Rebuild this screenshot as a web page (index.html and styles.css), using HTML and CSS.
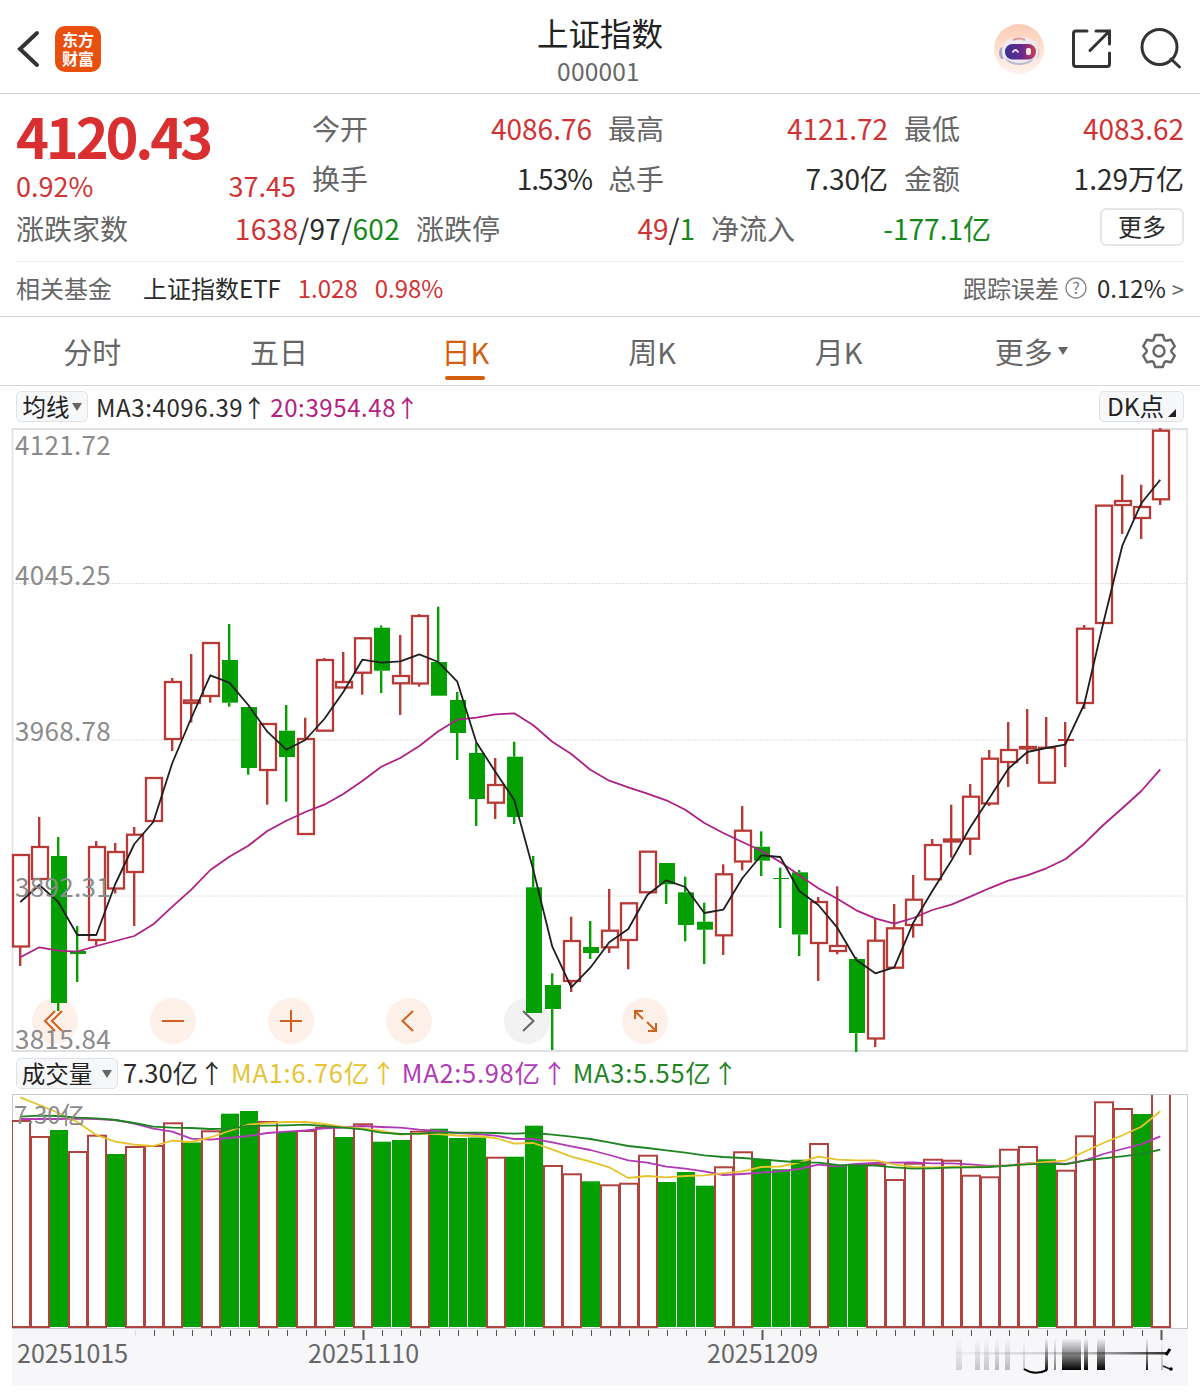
FILE: index.html
```
<!DOCTYPE html>
<html lang="zh-CN">
<head>
  <meta charset="UTF-8" />
  <meta name="viewport" content="width=device-width, initial-scale=1.0" />
  <title>上证指数 000001</title>
  <link rel="stylesheet" href="styles.css">
</head>
<body>
  <header class="header">
    <div class="header-left">
      <svg class="back" width="24" height="40" viewBox="0 0 24 40"><path d="M20 4 L3 20 L20 36" /></svg>
      <div class="logo"><span>东方</span><span>财富</span></div>
    </div>
    <div class="header-title">
      <h1>上证指数</h1>
      <div class="code">000001</div>
    </div>
    <div class="header-right">
      <svg width="50" height="50" viewBox="0 0 50 50">
        <defs>
          <linearGradient id="peach" x1="0" y1="0" x2="0" y2="1">
            <stop offset="0" stop-color="#fbccb4" /><stop offset="1" stop-color="#fff3ee" />
          </linearGradient>
          <linearGradient id="visor" x1="0" y1="0" x2="1" y2="0">
            <stop offset="0" stop-color="#3b3192" /><stop offset="0.55" stop-color="#672a8c" /><stop offset="1" stop-color="#c8414f" />
          </linearGradient>
        </defs>
        <circle cx="25" cy="25" r="25" fill="url(#peach)" />
        <ellipse cx="8.500" cy="29" rx="3.500" ry="6" fill="#aaa6bd" />
        <ellipse cx="43" cy="29" rx="2.500" ry="5" fill="#d8cad6" />
        <path d="M8 27 C8 18 15 13 26 13 S44 18 44 27 C44 37 38 41 26 41 S8 37 8 27 Z" fill="#efeaf2" />
        <path d="M11 34 Q26 44 40 34 Q36 41 26 41 Q14 41 11 34" fill="#bdb9cd" />
        <path d="M19 16 Q25 13 31 16" stroke="#dc9c90" stroke-width="2" fill="none" />
        <rect x="11" y="20" width="31" height="15.500" rx="7.500" fill="url(#visor)" />
        <path d="M18.500 28.500 Q21.500 23.500 24.500 28.500" stroke="#eee6ff" stroke-width="1.800" fill="none" />
        <rect x="32" y="24" width="5" height="7" rx="2" fill="#ffe4e8" />
      </svg>
      <svg class="line-icon" width="42" height="42" viewBox="0 0 42 42">
        <path d="M16 3 H5 Q2.500 3 2.500 5.500 V36 Q2.500 38.500 5 38.500 H36 Q38.500 38.500 38.500 36 V25 M25 3 H38.500 V16 M38 3.500 L19 22.500" />
      </svg>
      <svg class="line-icon" width="42" height="42" viewBox="0 0 42 42">
        <circle cx="19.500" cy="19" r="17.500" /><path d="M31 31 L39.500 39" />
      </svg>
    </div>
  </header>

  <section class="quote">
    <div class="quote-grid">
      <div class="price">4120.43</div>
      <div class="cell"><label>今开</label><span class="up">4086.76</span></div>
      <div class="cell"><label>最高</label><span class="up">4121.72</span></div>
      <div class="cell"><label>最低</label><span class="up">4083.62</span></div>
      <div class="cell change"><span class="up">0.92%</span><span class="up">37.45</span></div>
      <div class="cell"><label>换手</label><span class="pct">1.53%</span></div>
      <div class="cell"><label>总手</label><span>7.30亿</span></div>
      <div class="cell"><label>金额</label><span>1.29万亿</span></div>
    </div>
    <div class="quote-row">
      <div class="cell wide"><label>涨跌家数</label><span><b class="up">1638</b>/97/<b class="down">602</b></span></div>
      <div class="cell"><label>涨跌停</label><span><b class="up">49</b>/<b class="down">1</b></span></div>
      <div class="cell"><label>净流入</label><span class="down">-177.1亿</span></div>
      <button class="more">更多</button>
    </div>
    <div class="fund">
      <label>相关基金</label>
      <span class="fund-name">上证指数ETF</span>
      <span class="up">1.028</span>
      <span class="up">0.98%</span>
      <label class="track">跟踪误差</label>
      <svg width="22" height="22" viewBox="0 0 22 22">
        <circle cx="11" cy="11" r="10" fill="none" stroke="#8a8a8a" stroke-width="1.400" />
        <text x="11" y="16.500" class="help">?</text>
      </svg>
      <span class="err">0.12%</span>
      <span class="gt">&gt;</span>
    </div>
  </section>

  <nav class="tabs">
    <a>分时</a>
    <a>五日</a>
    <a class="active">日K</a>
    <a>周K</a>
    <a>月K</a>
    <a class="tab-more">更多<i class="caret"></i></a>
    <svg class="gear" width="38" height="38" viewBox="-19 -19 38 38">
      <path d="M-3.800 -16 H3.800 L5.500 -11 L6.800 -10.300 L12 -11.300 L15.800 -4.700 L12.300 -0.700 V0.700 L15.800 4.700 L12 11.300 L6.800 10.300 L5.500 11 L3.800 16 H-3.800 L-5.500 11 L-6.800 10.300 L-12 11.300 L-15.800 4.700 L-12.300 0.700 V-0.700 L-15.800 -4.700 L-12 -11.300 L-6.800 -10.300 L-5.500 -11 Z" />
      <circle r="5.500" />
    </svg>
  </nav>

  <div class="bar">
    <span class="chip">均线<i class="caret"></i></span>
    <span class="ma">MA3:4096.39<i>↑</i></span>
    <span class="ma ma20">20:3954.48<i>↑</i></span>
    <span class="chip dk">DK点<i class="corner"></i></span>
  </div>

  <svg class="chart" id="kline" width="1200" height="626" viewBox="0 427 1200 626"></svg>

  <div class="bar vol-bar">
    <span class="chip vol-chip">成交量<i class="caret"></i></span>
    <span class="vol">7.30亿<i>↑</i></span>
    <span class="vol ma1">MA1:6.76亿<i>↑</i></span>
    <span class="vol ma2">MA2:5.98亿<i>↑</i></span>
    <span class="vol ma3">MA3:5.55亿<i>↑</i></span>
  </div>

  <svg class="chart" id="volume" width="1200" height="292" viewBox="0 1094 1200 292"></svg>

  <script>
    const RED = '#b83a37';
    const GREEN = '#04a003';
    const STEP = 19;
    const cx = (i) => 20 + i * STEP;

    // [type, high, top, bottom, low]
    const candles = [
      ['r', 855, 855, 946.5, 966], ['r', 817, 847, 879, 879], ['g', 837, 856, 1003, 1011], ['g', 926, 951, 954, 982],
      ['r', 841, 847, 940, 945], ['r', 843, 852, 888.5, 893.5], ['r', 827, 834.7, 872, 926], ['r', 778, 778, 821, 821],
      ['r', 678, 682, 739, 751], ['r', 654, 700.5, 703, 722.6], ['r', 643, 643, 696, 702.7], ['g', 624, 660, 702.7, 706.7],
      ['g', 707, 707, 768, 774.7], ['r', 724, 724, 770, 804.7], ['g', 705, 730.7, 757, 801.7], ['r', 717.7, 739, 834, 834],
      ['r', 658, 660, 730.7, 731], ['r', 652, 682, 687.5, 688], ['r', 637, 638.3, 672.7, 694.7], ['g', 625.5, 627.7, 670.7, 693],
      ['r', 635, 676, 683.3, 715], ['r', 614, 616, 683.5, 686.7], ['g', 606.7, 662, 695.7, 695.7], ['g', 692, 700, 733, 760],
      ['g', 743, 753, 799, 826], ['r', 758, 785, 802.7, 819], ['g', 741.7, 756.7, 817, 824], ['g', 856, 887.3, 1013, 1013],
      ['g', 973.3, 985, 1009, 1050], ['r', 916.7, 941, 981, 992], ['g', 921, 947, 953, 959], ['r', 889, 930.7, 947.3, 953],
      ['r', 903.3, 903.3, 940, 969.3], ['r', 851.7, 851.7, 892.3, 893], ['g', 863, 863, 884.3, 904], ['g', 876.7, 892.3, 925, 941.3],
      ['g', 902.7, 921.7, 929.7, 964], ['r', 864.3, 874.3, 935.3, 955], ['r', 806, 830.7, 861.5, 870.3], ['g', 831.3, 846.7, 860.7, 876],
      ['g', 867.7, 878, 879, 928], ['g', 870, 872.3, 934.5, 956], ['r', 897, 902, 943, 981], ['r', 886.3, 946, 951, 954.3],
      ['g', 957, 959, 1033, 1052], ['r', 918.3, 940.7, 1038.5, 1047], ['r', 904, 928.3, 967.7, 967.7], ['r', 875, 899.7, 925, 937.7],
      ['r', 839, 845, 879.3, 879.3], ['r', 804.7, 839.5, 841.5, 857.7], ['r', 784, 796.7, 838.7, 855], ['r', 750, 758.7, 803.5, 806],
      ['r', 722, 750, 762, 787], ['r', 709, 747, 748.5, 764], ['r', 717, 747.7, 782.7, 782.7], ['r', 722, 740, 740, 767],
      ['r', 625, 628.7, 703, 709], ['r', 505.3, 505.6, 623, 623], ['r', 474.7, 501, 505, 534], ['r', 484.7, 507, 518, 539],
      ['r', 428, 430.7, 499.3, 505]
    ];

    const ma3 = [902, 885, 902, 935, 935, 884, 844, 822, 763, 718, 675.3, 682.7, 705, 731.7, 749.7, 740, 719, 692, 659.7, 662.7,
      661.3, 654.3, 662, 681.7, 742.3, 771.7, 800, 870, 946.7, 987.3, 967.7, 942.3, 929, 895, 880.3, 887, 913, 909.7, 878.3, 855.3,
      857, 891, 905, 927.7, 960, 973.3, 967.3, 922.7, 891, 860.7, 827.3, 798.3, 768.7, 752, 748, 744.7, 704, 623, 545.7, 503.3, 479.7];
    const ma20 = [957.3, 947.3, 950.7, 951.7, 946, 941, 936, 924.3, 906.7, 889.7, 870, 856.7, 845.7, 831, 820.7, 812, 804.7, 794, 781, 766.7,
      758, 746, 731.3, 719.7, 717.7, 714.3, 713.3, 725.3, 741.7, 754, 769.7, 780.7, 787.3, 793.7, 800.3, 809.7, 823, 833, 842, 850.7,
      862, 875.3, 888.3, 898.7, 910.3, 918.3, 923.7, 918, 910, 904.7, 896.7, 888.3, 880.7, 875.3, 868.3, 859.3, 843.7, 825, 808.3, 791, 769.3];

    // tops of the volume bars
    const volumes = [1121, 1137, 1130, 1152, 1135.7, 1154, 1147, 1146, 1123.3, 1142.5, 1131.3, 1113.7, 1111, 1122, 1132, 1131, 1127.7, 1137, 1124.3, 1141.7,
      1140, 1131.7, 1128.7, 1138, 1137.5, 1157.7, 1156.7, 1125.7, 1166, 1174.3, 1181.3, 1185.3, 1183.7, 1155.7, 1182, 1172, 1185.7, 1167.3, 1152.3, 1159.3,
      1169.3, 1159.7, 1144, 1166, 1163.7, 1165, 1180, 1163.7, 1159.7, 1160.7, 1175.7, 1177.3, 1149.7, 1147, 1159.3, 1170.7, 1136.3, 1102.3, 1109, 1114, 1085];
    const volColors = 'rrgrrgrrrgrggrgrrgrggrgggrggrrgrrrgggrrgggrggrrrrrrrrrgrrrrgr';

    const vma1 = [1097.3, 1105, 1113, 1122, 1135, 1141.7, 1144.7, 1146, 1140.7, 1142, 1137.5, 1131, 1124.7, 1123, 1122, 1122, 1124, 1127, 1128.5, 1131,
      1134.5, 1133.5, 1134, 1135.5, 1136, 1138, 1143.7, 1143, 1149.3, 1156.7, 1161.7, 1167.3, 1178, 1176, 1177.3, 1176, 1175.3, 1173.3, 1171.3, 1167,
      1166.5, 1162.5, 1156.7, 1159.7, 1160.3, 1160.3, 1164.3, 1167, 1167.3, 1166.7, 1166.7, 1166.7, 1165.7, 1163.7, 1162, 1160.7, 1151.7, 1143, 1135.3, 1126.7, 1111.3];
    const vma2 = [1119, 1119, 1119, 1118.5, 1119, 1120, 1123.7, 1128.7, 1131.7, 1138.7, 1139.7, 1138, 1136, 1133, 1131.7, 1130.3, 1128.3, 1127.5, 1126, 1127,
      1127.7, 1129.7, 1131, 1133, 1134, 1135.7, 1139, 1139, 1142.3, 1146.3, 1150, 1155, 1160.3, 1162.7, 1166.7, 1168.7, 1171.3, 1175, 1174, 1172.7,
      1171.3, 1169, 1164.7, 1166.3, 1164, 1163, 1162.7, 1162.3, 1163.3, 1163.3, 1164.3, 1166, 1165.3, 1163.5, 1162.5, 1164, 1160.7, 1154, 1149, 1144.3, 1136.3];
    const vma3 = [1116.7, 1115.7, 1116, 1117.7, 1118.3, 1120, 1123, 1126.7, 1127.7, 1128, 1129, 1128.7, 1126, 1125.7, 1125.3, 1124.7, 1126, 1127.7, 1129.3, 1132.7,
      1134, 1133.7, 1132.7, 1132.7, 1132.7, 1133, 1133.7, 1133, 1134.7, 1136.7, 1139, 1142.3, 1146, 1148, 1150.3, 1152.7, 1155.3, 1157, 1158, 1159.3,
      1161, 1162.3, 1162.7, 1165, 1165.3, 1165.7, 1167.3, 1168.7, 1168.3, 1167.7, 1167.3, 1167, 1165.7, 1164.3, 1163.7, 1164.3, 1160.7, 1158.3, 1156.3, 1154, 1149.7];

    function line(values, color) {
      const pts = values.map((y, i) => `${cx(i) + 0.3},${y}`).join(' ');
      return `<polyline points="${pts}" fill="none" stroke="${color}" stroke-width="1.8" stroke-linejoin="round"/>`;
    }

    function vline(x, y1, y2, color, w) {
      return `<path d="M${x} ${y1}V${y2}" stroke="${color}" stroke-width="${w}"/>`;
    }

    function drawKline() {
      let s = '<path d="M12 429H1188M12 1051H1188" stroke="#dfe0e1" stroke-width="2"/>';
      s += '<path d="M12.5 428V1052M1187 428V1052" stroke="#dfe0e1" stroke-width="1.5"/>';
      [583.5, 740, 896].forEach((y) => {
        s += `<path d="M13 ${y}H1187" stroke="#dedede" stroke-width="1" stroke-dasharray="2 1"/>`;
      });

      const buttons = [55, 173, 291, 409, 527, 645];
      buttons.forEach((x, i) => {
        s += `<circle cx="${x}" cy="1021" r="23" fill="${i === 4 ? '#f2f2f3' : '#fdf0e9'}"/>`;
      });

      candles.forEach(([type, high, top, bottom, low], i) => {
        const x = cx(i);
        const color = type === 'r' ? RED : GREEN;
        s += vline(x + 0.2, high, top, color, 2.4) + vline(x + 0.2, bottom, low, color, 2.4);
        if (type === 'g') {
          s += `<rect x="${x - 7}" y="${top}" width="16" height="${bottom - top}" fill="${color}"/>`;
        } else if (bottom === top) {
          s += `<path d="M${x - 7} ${top}H${x + 9}" stroke="${color}" stroke-width="2"/>`;
        } else {
          s += `<rect x="${x - 7}" y="${top}" width="16" height="${bottom - top}" fill="none" stroke="${color}" stroke-width="2.3"/>`;
        }
      });

      s += line(ma20, '#ad2184') + line(ma3, '#1f1f1f');

      // control icons
      s += '<g fill="none" stroke="#d0611f" stroke-width="2">';
      s += '<path d="M55 1011L45 1021L55 1031M62 1011L52 1021L62 1031"/>';
      s += '<path d="M162 1021H184M280 1021H302M291 1010V1032M413 1011L402.500 1021L413 1031"/>';
      s += '<path d="M635 1019V1011H643M635 1011L643 1019M648 1031H656V1023M656 1031L647 1022"/></g>';
      s += '<path d="M523 1011L533.500 1021L523 1031" fill="none" stroke="#666" stroke-width="2"/>';

      [['4121.72', 455], ['4045.25', 585], ['3968.78', 741], ['3892.31', 897], ['3815.84', 1049]].forEach(([t, y]) => {
        s += `<text x="15" y="${y}" class="axis-label">${t}</text>`;
      });
      document.getElementById('kline').innerHTML = s;
    }

    function drawVolume() {
      let s = '<defs><clipPath id="frame"><rect x="12" y="1095" width="1176" height="234"/></clipPath>';
      s += '<linearGradient id="fade" x1="0" y1="0" x2="0" y2="1"><stop offset="0" stop-color="#000" stop-opacity="0"/><stop offset="0.5" stop-color="#000" stop-opacity="0.45"/><stop offset="1" stop-color="#000"/></linearGradient>';
      s += '<linearGradient id="fadeX"><stop offset="0" stop-color="#000" stop-opacity="0.03"/><stop offset="0.6" stop-color="#000" stop-opacity="0.2"/><stop offset="1" stop-color="#000" stop-opacity="0.8"/></linearGradient></defs>';
      s += '<rect x="12" y="1329" width="1176" height="57" fill="#f7f7fa"/>';
      s += '<rect x="12.500" y="1094.500" width="1175" height="234" fill="#fff" stroke="#c9c9c9"/>';
      s += '<g clip-path="url(#frame)">';
      volumes.forEach((y, i) => {
        const x = cx(i);
        if (volColors[i] === 'g') s += `<rect x="${x - 8}" y="${y}" width="18" height="${1327 - y}" fill="${GREEN}"/>`;
      });
      volumes.forEach((y, i) => {
        const x = cx(i);
        if (volColors[i] === 'r') s += `<rect x="${x - 8}" y="${y}" width="18" height="${1327 - y}" fill="none" stroke="#b04340" stroke-width="2"/>`;
      });
      s += '</g>';
      s += line(vma2, '#b239b5') + line(vma1, '#e6c32d') + line(vma3, '#1f8424');
      s += '<text x="14" y="1124" class="vol-label">7.30亿</text>';

      for (let i = 6; i <= 60; i++) {
        const big = i === 18 || i === 39 || i === 60;
        s += vline(cx(i) + 1.5, 1330, big ? 1340 : 1336, i === 6 ? '#ddd' : '#555', big ? 2 : 1);
      }
      s += '<text x="17" y="1363" class="date">20251015</text>';
      s += '<text x="308" y="1363" class="date">20251110</text>';
      s += '<text x="707" y="1363" class="date">20251209</text>';

      // smeared mark in the lower right corner: [x, width, opacity]
      [[956, 6, 0.15], [975, 5, 0.2], [984, 5, 0.2], [995, 4, 0.25], [1005, 5, 0.25], [1023, 2, 0.2], [1045, 3, 0.9], [1054, 2, 0.5],
        [1062, 19, 1], [1084, 4, 1], [1097, 8, 1], [1146, 2, 0.9], [1161, 2, 0.25]].forEach(([x, w, o]) => {
        s += `<rect x="${x}" y="1338" width="${w}" height="32" fill="url(#fade)" opacity="${o}"/>`;
      });
      s += '<rect x="956" y="1352" width="211" height="2.500" fill="url(#fadeX)"/>';
      s += '<path d="M1024 1369Q1035 1376 1047 1370" fill="none" stroke="#000" stroke-width="2"/>';
      s += '<path d="M1166 1355L1170 1349" stroke="#000" stroke-width="3"/>';
      s += '<path d="M1163 1366L1170 1369" stroke="#222" stroke-width="1.500"/><circle cx="1171" cy="1369" r="1.800"/>';
      document.getElementById('volume').innerHTML = s;
    }

    drawKline();
    drawVolume();
  </script>
</body>
</html>
```
FILE: styles.css
```
* {
  box-sizing: border-box;
}
body {
  margin: 0;
  width: 1200px;
  height: 1398px;
  overflow: hidden;
  background: #fff;
  color: #2b2b2b;
  font-family: "Noto Sans CJK SC", sans-serif;
  font-size: 28px;
  line-height: 1;
}
i, b {
  font-style: normal;
  font-weight: normal;
}
svg {
  display: block;
  flex: none;
  overflow: visible;
}
.up {
  color: #d03335;
}
.down {
  color: #16891c;
}

.header {
  display: grid;
  grid-template-columns: 1fr 200px 1fr;
  height: 94px;
  border-bottom: 1px solid #d2d3d4;
}
.header-left, .header-right {
  display: flex;
  align-items: center;
  padding-top: 4px;
}
.header-left {
  padding-left: 17px;
  gap: 14px;
}
.header-right {
  justify-content: flex-end;
  gap: 27px;
  padding-right: 18px;
}
.back {
  fill: none;
  stroke: #333;
  stroke-width: 4;
  stroke-linecap: round;
}
.logo {
  display: flex;
  flex-direction: column;
  align-items: center;
  justify-content: center;
  gap: 3px;
  width: 46px;
  height: 46px;
  padding-bottom: 1px;
  border-radius: 10px;
  background: #e9500e;
  color: #fff;
  font-size: 16px;
  font-weight: bold;
}
.header-title {
  text-align: center;
}
h1 {
  margin: 16px 0 0;
  font-size: 31.5px;
  line-height: 32px;
  font-weight: normal;
  color: #222;
}
.code {
  margin-top: 10px;
  padding-right: 3px;
  font-size: 24.5px;
  line-height: 25px;
  letter-spacing: 0.2px;
  color: #666;
}
.line-icon {
  fill: none;
  stroke: #333;
  stroke-width: 3;
  stroke-linecap: round;
}

.quote {
  height: 223px;
  padding: 9px 16px 0;
  border-bottom: 1px solid #d2d3d4;
}
.quote-grid {
  display: grid;
  grid-template-columns: repeat(4, 280px);
  grid-template-rows: 50px 50px;
  gap: 0 16px;
}
.cell {
  display: flex;
  justify-content: space-between;
  align-items: center;
  height: 50px;
}
label {
  color: #666;
}
.price {
  font-size: 56px;
  font-weight: bold;
  line-height: 64px;
  letter-spacing: -3.2px;
  color: #d92f30;
}
.change {
  padding-top: 15px;
  font-size: 27px;
}
.pct {
  letter-spacing: -1px;
}
.wide span {
  letter-spacing: 0.3px;
}
.quote-row {
  display: grid;
  grid-template-columns: 384px 279px 280px 1fr;
  gap: 0 16px;
  height: 59px;
  border-bottom: 1px solid #eee;
}
.more {
  justify-self: end;
  width: 84px;
  height: 38px;
  margin-top: 5px;
  padding: 0 0 3px;
  border: 2px solid #e6e6e6;
  border-radius: 6px;
  background: #fff;
  color: #2b2b2b;
  font: 24px/1 "Noto Sans CJK SC", sans-serif;
}
.fund {
  display: flex;
  align-items: center;
  height: 52px;
  font-size: 24px;
}
.fund-name {
  margin: 0 17px 0 31px;
}
.fund .up + .up {
  margin-left: 17px;
}
.track {
  margin: 0 6px 0 auto;
}
.help {
  font-size: 16px;
  fill: #777;
  text-anchor: middle;
}
.err {
  margin: 0 6px 0 10px;
}
.gt {
  font-size: 22px;
  color: #666;
}

.tabs {
  display: grid;
  grid-template-columns: repeat(6, 186.6px) 80px;
  align-items: center;
  height: 69px;
  border-bottom: 1px solid #d2d7db;
  color: #666;
  font-size: 29px;
}
.tabs a {
  display: flex;
  align-items: center;
  justify-content: center;
  height: 68px;
  padding-right: 2px;
}
.tabs .tab-more {
  padding: 0 0 0 10px;
}
.tabs .active {
  position: relative;
  color: #d3600f;
}
.tabs .active::after {
  content: "";
  position: absolute;
  left: 72px;
  bottom: 5px;
  width: 40px;
  height: 4px;
  border-radius: 2px;
  background: #d3600f;
}
.gear {
  margin-left: 20px;
  fill: none;
  stroke: #666;
  stroke-width: 2.4;
  stroke-linejoin: round;
}
.caret {
  display: inline-block;
  border: 5px solid transparent;
  border-top: 8px solid #666;
  border-bottom: 0;
}
.tabs .caret {
  margin-left: 5px;
}

.bar {
  display: flex;
  align-items: center;
  height: 41px;
  padding: 0 16px;
}
.chip {
  display: flex;
  align-items: center;
  justify-content: center;
  width: 72px;
  height: 31px;
  border: 1px solid #e0e3e6;
  border-radius: 5px;
  background: #f6f7f9;
  color: #222;
  font-size: 23.5px;
}
.chip .caret {
  margin-left: 2px;
}
.ma {
  margin-left: 8px;
  font-size: 24px;
  letter-spacing: 0.6px;
}
.ma i, .vol i {
  display: inline-block;
  width: 20px;
  margin-left: 1px;
  letter-spacing: 0;
  text-indent: -2px;
}
.ma20 {
  margin-left: 6px;
  color: #b4217f;
}
.dk {
  width: 85px;
  margin-left: auto;
  gap: 4px;
  font-size: 24.5px;
}
.corner {
  align-self: flex-end;
  margin-bottom: 4px;
  border-left: 8px solid transparent;
  border-bottom: 8px solid #222;
}
.vol-chip {
  width: 102px;
}
.vol-chip .caret {
  margin-left: 10px;
}
.vol {
  margin-left: 5px;
  padding-bottom: 4px;
  font-size: 25.5px;
}
.vol i {
  text-indent: 0;
}
.ma1, .ma2, .ma3 {
  margin-left: 11px;
  letter-spacing: 0.7px;
}
.ma1 {
  margin-left: 12px;
  color: #e5c436;
}
.ma2 {
  color: #b13bb8;
}
.ma3 {
  color: #1f8424;
}

.axis-label {
  font-size: 26px;
  letter-spacing: 0.3px;
  fill: #8b8b8b;
}
.vol-label {
  font-size: 24px;
  fill: #8b8b8b;
}
.date {
  font-size: 25px;
  fill: #666;
}
```
